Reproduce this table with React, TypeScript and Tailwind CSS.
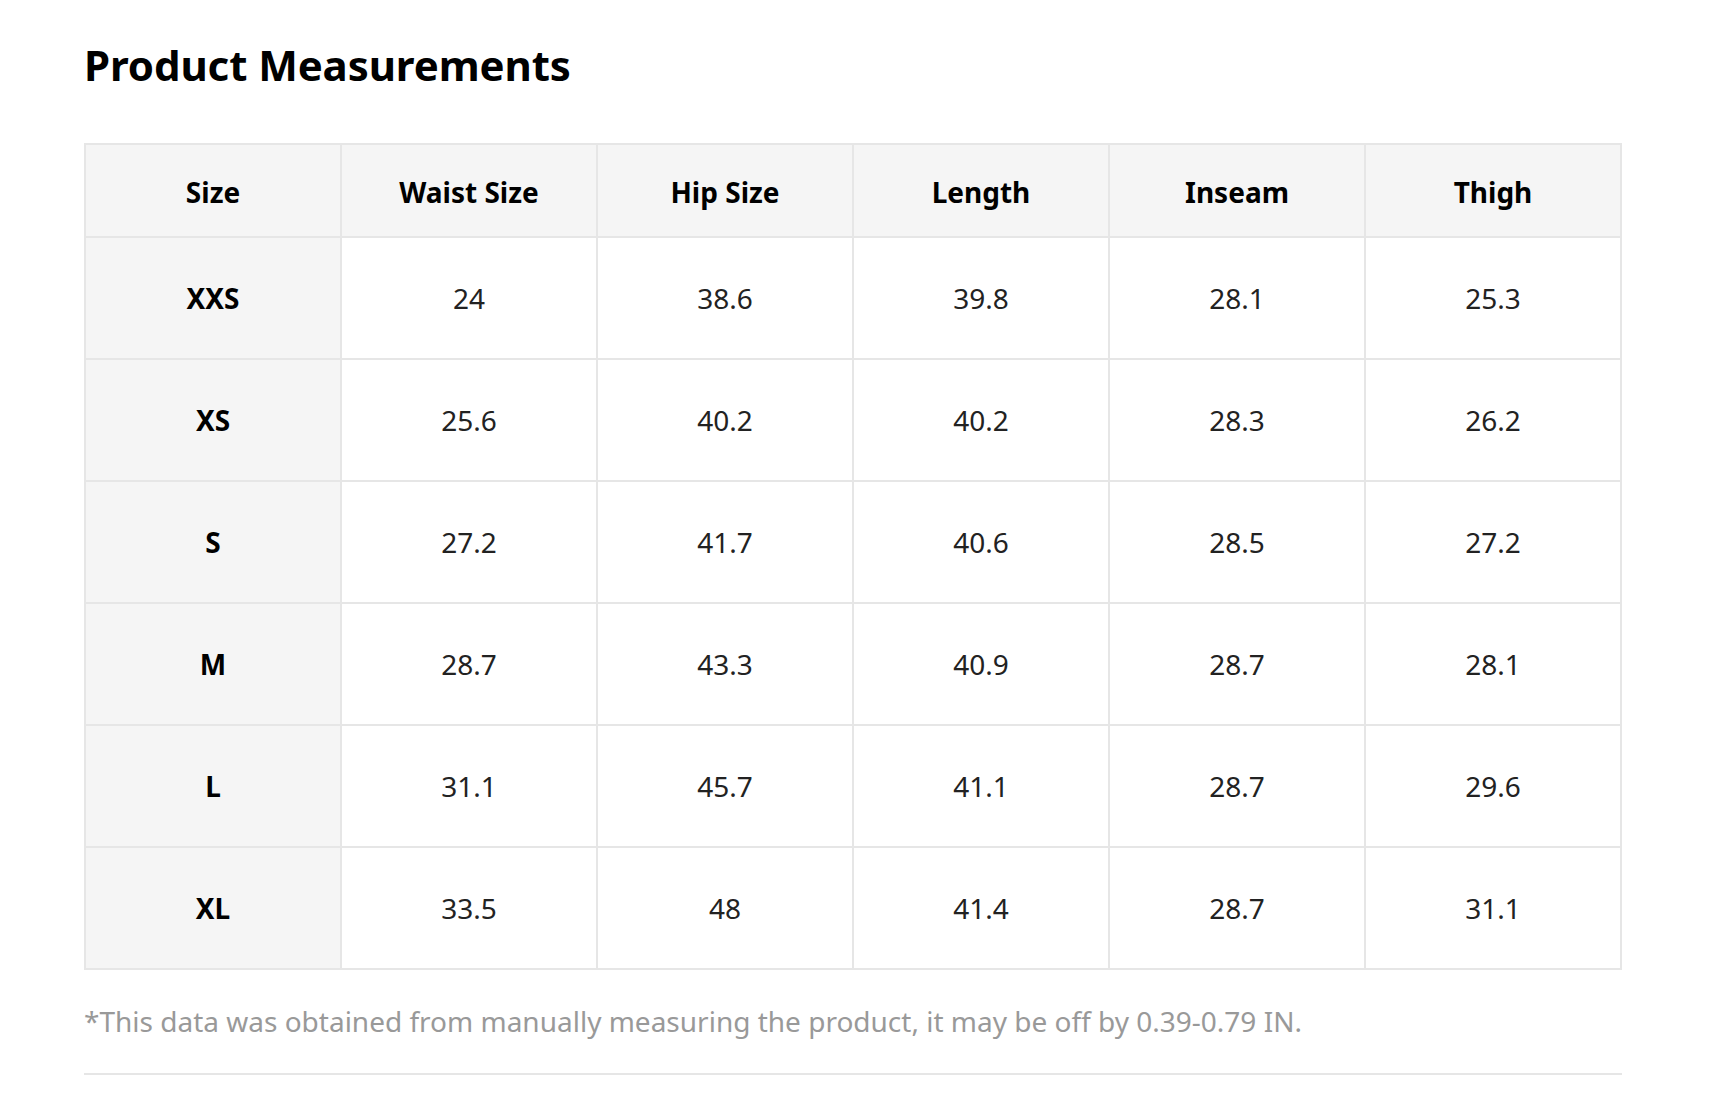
import React from "react";

const headers = ["Size", "Waist Size", "Hip Size", "Length", "Inseam", "Thigh"];
const rows: string[][] = [
  ["XXS", "24", "38.6", "39.8", "28.1", "25.3"],
  ["XS", "25.6", "40.2", "40.2", "28.3", "26.2"],
  ["S", "27.2", "41.7", "40.6", "28.5", "27.2"],
  ["M", "28.7", "43.3", "40.9", "28.7", "28.1"],
  ["L", "31.1", "45.7", "41.1", "28.7", "29.6"],
  ["XL", "33.5", "48", "41.4", "28.7", "31.1"],
];

export default function App() {
  return (
    <div
      className="min-h-[1120px] w-[1710px] bg-white text-black"
      style={{ fontFamily: '"Noto Sans", "Open Sans", sans-serif' }}
    >
      <div className="pl-[84px] pr-[88px] pt-[37px]">
        <h1 className="text-[42px] font-bold leading-[56px] tracking-[-0.1px]">Product Measurements</h1>
        <table className="mt-[50px] w-[1538px] table-fixed border-collapse">
          <thead>
            <tr className="h-[93px] bg-[#f5f5f5]">
              {headers.map((h) => (
                <th
                  key={h}
                  className="border-2 border-[#e6e6e6] pt-[3px] text-center text-[28px] font-bold"
                >
                  {h}
                </th>
              ))}
            </tr>
          </thead>
          <tbody>
            {rows.map((r) => (
              <tr key={r[0]} className="h-[122px]">
                {r.map((c, i) => (
                  <td
                    key={i}
                    className={
                      i === 0
                        ? "border-2 border-[#e6e6e6] bg-[#f5f5f5] text-center text-[28px] font-bold"
                        : "border-2 border-[#e6e6e6] text-center text-[28px] font-normal text-[#222]"
                    }
                  >
                    {c}
                  </td>
                ))}
              </tr>
            ))}
          </tbody>
        </table>
        <p className="mt-[31px] text-[28px] leading-[40px] text-[#999999]">
          *This data was obtained from manually measuring the product, it may be off by 0.39-0.79 IN.
        </p>
        <div className="mt-[32px] h-[2px] w-[1538px] bg-[#e6e6e6]" />
      </div>
    </div>
  );
}
